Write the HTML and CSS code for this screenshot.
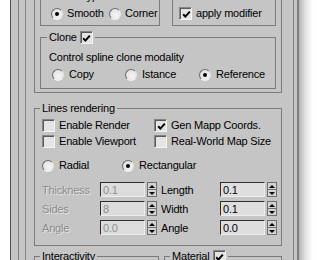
FILE: index.html
```html
<!DOCTYPE html>
<html lang="en">
<head>
  <meta charset="UTF-8">
  <title>Spline Clone Parameters</title>
  <link rel="stylesheet" href="styles.css">
</head>
<body>
  <div class="panel">
    <div class="rollout">
      <div class="inner">

        <div class="top-group">
          <div class="top-row">
            <fieldset class="box vertex-box">
              <legend>Vertex type</legend>
              <div class="opt-row">
                <label class="opt wide"><span class="radio on"></span>Smooth</label>
                <label class="opt"><span class="radio"></span>Corner</label>
              </div>
            </fieldset>
            <fieldset class="box mod-box">
              <legend>Path modifier</legend>
              <label class="opt chk"><span class="check on"><svg viewBox="0 0 9 9"><polyline points="1.2,4.2 3.4,6.6 7.8,1.6"/></svg></span>apply modifier</label>
            </fieldset>
          </div>

          <fieldset class="box clone-box">
            <legend>Clone<span class="check on"><svg viewBox="0 0 9 9"><polyline points="1.2,4.2 3.4,6.6 7.8,1.6"/></svg></span></legend>
            <p class="note">Control spline clone modality</p>
            <div class="clone-opts">
              <label class="opt"><span class="radio"></span>Copy</label>
              <label class="opt"><span class="radio"></span>Istance</label>
              <label class="opt"><span class="radio on"></span>Reference</label>
            </div>
          </fieldset>
        </div>

        <fieldset class="box lines-box">
          <legend>Lines rendering</legend>
          <div class="check-grid">
            <label class="opt chk"><span class="check"></span>Enable Render</label>
            <label class="opt chk"><span class="check on"><svg viewBox="0 0 9 9"><polyline points="1.2,4.2 3.4,6.6 7.8,1.6"/></svg></span>Gen Mapp Coords.</label>
            <label class="opt chk"><span class="check"></span>Enable Viewport</label>
            <label class="opt chk"><span class="check"></span>Real-World Map Size</label>
          </div>
          <div class="shape-row">
            <label class="opt"><span class="radio"></span>Radial</label>
            <label class="opt"><span class="radio on"></span>Rectangular</label>
          </div>
          <div class="spin-grid">
            <div class="spinner off">
              <span class="spin-label">Thickness</span>
              <input class="field" type="text" value="0.1" disabled>
              <span class="spin"><i class="up"></i><i class="down"></i></span>
            </div>
            <div class="spinner">
              <span class="spin-label">Length</span>
              <input class="field" type="text" value="0.1">
              <span class="spin"><i class="up"></i><i class="down"></i></span>
            </div>
            <div class="spinner off">
              <span class="spin-label">Sides</span>
              <input class="field" type="text" value="8" disabled>
              <span class="spin"><i class="up"></i><i class="down"></i></span>
            </div>
            <div class="spinner">
              <span class="spin-label">Width</span>
              <input class="field" type="text" value="0.1">
              <span class="spin"><i class="up"></i><i class="down"></i></span>
            </div>
            <div class="spinner off">
              <span class="spin-label">Angle</span>
              <input class="field" type="text" value="0.0" disabled>
              <span class="spin"><i class="up"></i><i class="down"></i></span>
            </div>
            <div class="spinner">
              <span class="spin-label">Angle</span>
              <input class="field" type="text" value="0.0">
              <span class="spin"><i class="up"></i><i class="down"></i></span>
            </div>
          </div>
        </fieldset>

        <div class="bottom-row">
          <fieldset class="box inter-box">
            <legend>Interactivity</legend>
          </fieldset>
          <fieldset class="box mat-box">
            <legend>Material<span class="check on"><svg viewBox="0 0 9 9"><polyline points="1.2,4.2 3.4,6.6 7.8,1.6"/></svg></span></legend>
          </fieldset>
        </div>

      </div>
    </div>
  </div>
</body>
</html>
```

FILE: styles.css
```css
body {
  margin: 0;
  height: 260px;
  overflow: hidden;
  font-family: "Liberation Sans", Arial, sans-serif;
  font-size: 11px;
  letter-spacing: -0.2px;
  color: #000;
  background: linear-gradient(90deg, #fff 299px, #b4b4b4 299px, #e4e4e4 306px, #fff 313px);
}
.panel {
  margin: -10px 0 0 10px;
  width: 289px;
  box-sizing: border-box;
  padding: 0 3px 0 7px;
  background: #c5c5c5;
  border-left: 1px solid #4e4e4e;
  border-right: 2px solid #7e7e7e;
}
.rollout {
  padding-left: 6px;
  border-left: 1px solid #808080;
  border-right: 1px solid #808080;
}
.inner {
  padding: 0 11px 0 8px;
  border-left: 1px solid #868686;
  min-height: 300px;
}
.box {
  margin: 0;
  min-width: 0;
  box-sizing: border-box;
  border: 1px solid #7a7a7a;
}
.box legend {
  display: flex;
  align-items: center;
  gap: 3px;
  height: 13px;
  line-height: 13px;
  margin-left: -2px;
  padding: 0 2px;
}
.top-group {
  padding: 0 5px 3px;
  border: 1px solid #7a7a7a;
  border-top: 0;
}
.top-row {
  display: flex;
  gap: 12px;
}
.vertex-box {
  width: 120px;
  padding: 4px 0 5px 10px;
}
.mod-box {
  flex: 1;
  padding: 4px 0 5px 6px;
}
.clone-box {
  margin-top: 5px;
  padding: 7px 0 7px 8px;
}
.note {
  margin: 0;
  line-height: 13px;
}
.opt-row {
  display: flex;
}
.opt {
  display: flex;
  align-items: center;
  gap: 4px;
  height: 13px;
  line-height: 13px;
  white-space: nowrap;
}
.opt-row .wide {
  width: 58px;
}
.clone-opts {
  display: grid;
  grid-template-columns: 73px 74px auto;
  margin-top: 4px;
  padding-left: 3px;
}
.clone-opts .opt {
  gap: 5px;
}
.radio {
  position: relative;
  width: 12px;
  height: 12px;
  flex: none;
  box-sizing: border-box;
  border-radius: 50%;
  border: 1px solid;
  border-color: #6c6c6c #e6e6e6 #f4f4f4 #6c6c6c;
  background: radial-gradient(circle at 60% 60%, #f6f6f6 0, #e2e2e2 70%, #c9c9c9 100%);
}
.radio.on::after {
  content: "";
  position: absolute;
  left: 3px;
  top: 3px;
  width: 4px;
  height: 4px;
  border-radius: 50%;
  background: #000;
}
.check {
  display: flex;
  align-items: center;
  justify-content: center;
  width: 13px;
  height: 13px;
  flex: none;
  box-sizing: border-box;
  border: 1px solid;
  border-color: #858585 #f4f4f4 #f4f4f4 #858585;
  box-shadow: inset 1px 1px 0 #5a5a5a;
  background: #e4e4e4;
}
.check svg {
  width: 9px;
  height: 9px;
  margin: 1px 0 0 1px;
}
.check polyline {
  fill: none;
  stroke: #000;
  stroke-width: 2;
}
.chk {
  gap: 4px;
}
.lines-box {
  margin-top: 9px;
  padding: 4px 3px 10px 7px;
}
.check-grid {
  display: grid;
  grid-template-columns: 112px auto;
  row-gap: 3px;
}
.shape-row {
  display: grid;
  grid-template-columns: 80px auto;
  margin-top: 11px;
}
.shape-row .opt {
  gap: 5px;
}
.spin-grid {
  display: grid;
  grid-template-columns: 115px 116px;
  column-gap: 4px;
  row-gap: 4px;
  margin-top: 10px;
}
.spinner {
  display: flex;
  align-items: center;
  height: 15px;
}
.spin-label {
  flex: 1;
}
.spinner.off .spin-label {
  color: #8b8b8b;
  text-shadow: 1px 1px 0 rgba(245, 245, 245, 0.7);
}
.field {
  width: 45px;
  height: 15px;
  box-sizing: border-box;
  margin: 0 2px 0 0;
  padding: 0 0 0 2px;
  font: inherit;
  letter-spacing: inherit;
  line-height: 13px;
  color: #000;
  background: #dedede;
  border: 1px solid;
  border-color: #2e2e2e #ededed #ededed #2e2e2e;
  outline: none;
}
.field:disabled {
  color: #8e8e8e;
  background: #dcdcdc;
}
.spin {
  display: flex;
  flex-direction: column;
  width: 10px;
  height: 15px;
  box-sizing: border-box;
  border: 1px solid #6e6e6e;
  background: #d2d2d2;
}
.spin i {
  flex: 1;
  display: flex;
  align-items: center;
  justify-content: center;
}
.spin i + i {
  border-top: 1px solid #6e6e6e;
}
.spin .up::before,
.spin .down::before {
  content: "";
  border-left: 3px solid transparent;
  border-right: 3px solid transparent;
}
.spin .up::before {
  border-bottom: 3px solid #000;
}
.spin .down::before {
  border-top: 3px solid #000;
}
.bottom-row {
  display: flex;
  gap: 5px;
  margin-top: 4px;
}
.inter-box {
  width: 125px;
  min-height: 40px;
  padding: 0 0 0 7px;
}
.mat-box {
  flex: 1;
  min-height: 40px;
  padding: 0 0 0 7px;
}
```
